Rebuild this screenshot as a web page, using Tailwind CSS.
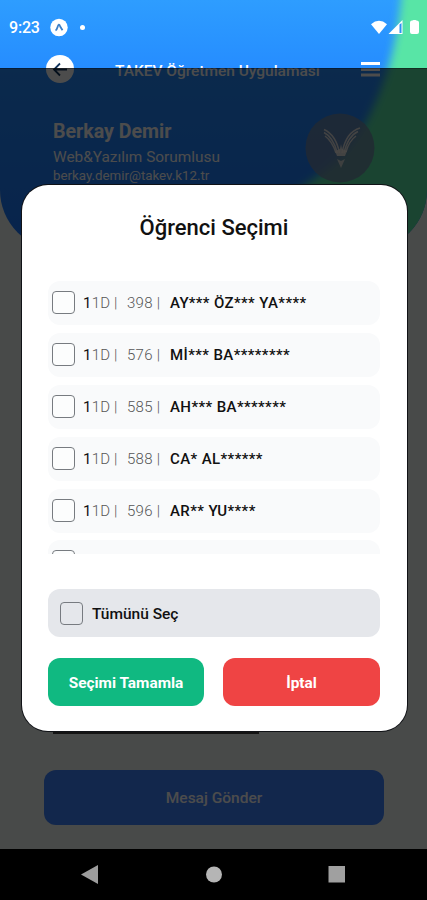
<!DOCTYPE html>
<html lang="tr">
<head>
<meta charset="utf-8">
<title>Öğrenci Seçimi</title>
<script src="https://cdn.jsdelivr.net/npm/@tailwindcss/browser@4"></script>
</head>
<body class="bg-black">
<div class="relative flex h-[900px] w-[427px] flex-col overflow-hidden bg-[#f2f8f4] font-[Roboto,sans-serif]">
  <header class="relative h-[250px] shrink-0 overflow-hidden rounded-b-[60px] bg-linear-to-b from-[#2e9dff] via-[#258bff] via-30% to-[#1b78ff] text-white">
    <svg class="absolute inset-0" width="427" height="250" viewBox="0 0 427 250">
      <defs><filter id="soft" x="-20%" y="-20%" width="140%" height="140%"><feGaussianBlur stdDeviation="4"/></filter></defs>
      <path d="M403 -20 C400 20 394 50 387 72 C374 110 360 139 337 161 C315 180 285 200 250 212 L250 290 L460 290 L460 -20Z" fill="#59e5a6" filter="url(#soft)"/>
    </svg>
    <div class="relative flex h-[56px] items-center pl-[9px] pr-[7px]">
      <span class="w-[31px] text-[16px] font-medium leading-none tracking-[-0.2px]">9:23</span>
      <svg class="ml-[9px]" width="20" height="20" viewBox="0 0 20 20"><circle cx="10" cy="9.500" r="8.700" fill="#fff"/><path d="M6.500 12.500Q7.700 12 8.500 9.200Q9.800 4.500 11.200 8.500L13.500 12.300" fill="none" stroke="#3b7fc8" stroke-width="1.800"/></svg>
      <span class="-mt-[2px] ml-[11px] size-[5px] rounded-full bg-white"></span>
      <svg class="ml-auto" width="50" height="18" viewBox="0 0 50 18"><path d="M1 5.200Q9 -1.500 17 5.200L9 15Z" fill="#fff"/><path d="M32.500 1V15H18.500Z" fill="#fff"/><path d="M29.500 5.500V14H31.500V4Z" fill="#2b92f5"/><path d="M40 3.500Q40 1.500 42 1.500H42.500L43.500 1H45.500L46.500 1.500Q49 1.500 49 3.500V13Q49 15 47 15H42Q40 15 40 13Z" fill="#fff"/></svg>
    </div>
    <div class="relative flex h-[26px] items-center pl-[46px] pr-[46px]">
      <svg class="shrink-0" width="28" height="28" viewBox="0 0 28 28"><circle cx="14" cy="14" r="14" fill="#fff"/><path d="M21 14.500H8M14 8.500L8 14.500L14 20.500" fill="none" stroke="#10335c" stroke-width="1.800"/></svg>
      <h2 class="ml-[41px] whitespace-nowrap pt-[3px] text-[15.500px] font-medium leading-5 tracking-[-0.02px]">TAKEV Öğretmen Uygulaması</h2>
      <svg class="ml-auto" width="22" height="20" viewBox="0 0 22 20"><path d="M2 4.500H21M2 10.500H21M2 16H21" stroke="#fff" stroke-width="3"/></svg>
    </div>
    <div class="relative flex justify-between pl-[53px] pr-[52px] pt-[31px]">
      <div class="pt-[7px]">
        <h1 class="text-[19.600px] font-bold leading-6">Berkay Demir</h1>
        <p class="mt-[3px] text-[15.400px] leading-5">Web&amp;Yazılım Sorumlusu</p>
        <p class="text-[13.300px] leading-[18px]">berkay.demir@takev.k12.tr</p>
      </div>
      <svg width="70" height="70" viewBox="0 0 70 70"><circle cx="35" cy="35" r="34.500" fill="#7289a8" fill-opacity=".8"/><g fill="none" stroke="#f5ede6" stroke-opacity=".85" stroke-width="1.500"><path d="M19 16.500Q31 22 34.500 40M19 19.500Q28 24 32.500 40M20 23Q27 28 31 40"/><path d="M55 15Q41 19 37 40M53 18.500Q43 23 39 40M51 23Q44 28 41 39"/></g><path d="M30 38L35 36L36 31L37 36L42 38L40 43H32Z" fill="#f5ede6" fill-opacity=".85"/><path d="M32 46L36 48L40 46L36 55Z" fill="#f5ede6" fill-opacity=".7"/></svg>
    </div>
  </header>
  <main class="flex flex-1 flex-col px-[44px]">
    <div class="mx-[9px] h-[484px] w-[206px] border-b-2 border-[#444]"></div>
    <button class="mt-[36px] h-[55px] w-[340px] rounded-[12px] bg-[#3d82ff] pt-[3px] text-[15.500px] font-medium text-white">Mesaj Gönder</button>
  </main>
  <nav class="relative z-20 flex h-[51px] shrink-0 items-center bg-black pl-[80px] pr-[80px]">
    <svg width="267" height="20" viewBox="0 0 267 20"><path d="M1 9.500L18 0V19Z" fill="#9d9d9d"/><circle cx="134" cy="9.500" r="8" fill="#b5b5b5"/><path d="M248.500 1H265V17.500H248.500Z" fill="#a0a0a0"/></svg>
  </nav>

  <div class="absolute inset-x-0 bottom-[51px] top-[68px] z-10 border-t border-black/30 bg-black/70 px-[21.500px] pt-[116px]">
    <section class="flex h-[546px] w-[385px] flex-col rounded-[26px] bg-white px-[26.500px] text-[#111] shadow-[0_0_0_1px_#101216]">
      <h2 class="pt-[30px] text-center text-[22px] font-medium leading-[26px]">Öğrenci Seçimi</h2>
      <ul class="mt-[40px] flex h-[273px] flex-col gap-[8px] overflow-hidden text-[15px] [&_li]:flex [&_li]:h-[44px] [&_li]:shrink-0 [&_li]:items-center [&_li]:rounded-[12px] [&_li]:bg-[#f9fafb] [&_li]:pb-[2px] [&_li]:pl-[4px] [&_i]:size-[23px] [&_i]:shrink-0 [&_i]:rounded-[4px] [&_i]:border [&_i]:border-[#777b80] [&_i]:bg-[#fcfdfd] [&_span]:whitespace-pre [&_span]:pt-[3px] [&_span]:text-[#555] [&_span]:font-light [&_b]:pt-[3px] [&_b]:font-medium [&_b]:tracking-[0.4px]">
        <li><i></i><span class="ml-[8px] w-[44px] tracking-[0.2px]"><em class="font-normal not-italic text-[#111]">1</em>1D |</span><span class="w-[43px] tracking-[0.3px]">398 |</span><b>AY*** ÖZ*** YA****</b></li>
        <li><i></i><span class="ml-[8px] w-[44px] tracking-[0.2px]"><em class="font-normal not-italic text-[#111]">1</em>1D |</span><span class="w-[43px] tracking-[0.3px]">576 |</span><b>Mİ*** BA********</b></li>
        <li><i></i><span class="ml-[8px] w-[44px] tracking-[0.2px]"><em class="font-normal not-italic text-[#111]">1</em>1D |</span><span class="w-[43px] tracking-[0.3px]">585 |</span><b>AH*** BA*******</b></li>
        <li><i></i><span class="ml-[8px] w-[44px] tracking-[0.2px]"><em class="font-normal not-italic text-[#111]">1</em>1D |</span><span class="w-[43px] tracking-[0.3px]">588 |</span><b>CA* AL******</b></li>
        <li><i></i><span class="ml-[8px] w-[44px] tracking-[0.2px]"><em class="font-normal not-italic text-[#111]">1</em>1D |</span><span class="w-[43px] tracking-[0.3px]">596 |</span><b>AR** YU****</b></li>
        <li class="-mt-px"><i></i></li>
      </ul>
      <label class="mt-[35px] flex h-[48px] w-[332px] shrink-0 items-center rounded-[12px] bg-[#e5e7eb] pl-[12px] text-[15.500px] font-medium"><i class="mr-[9px] size-[23px] rounded-[4px] border border-[#777b80]"></i><span class="pt-[3px]">Tümünü Seç</span></label>
      <div class="mt-[21px] flex w-[332px] gap-[19px] text-[15.400px] font-bold text-white">
        <button class="h-[48px] w-[156px] rounded-[12px] bg-[#10b981] pt-[4px]">Seçimi Tamamla</button>
        <button class="h-[48px] flex-1 rounded-[12px] bg-[#ef4444] pt-[4px]">İptal</button>
      </div>
    </section>
  </div>
</div>
</body>
</html>
